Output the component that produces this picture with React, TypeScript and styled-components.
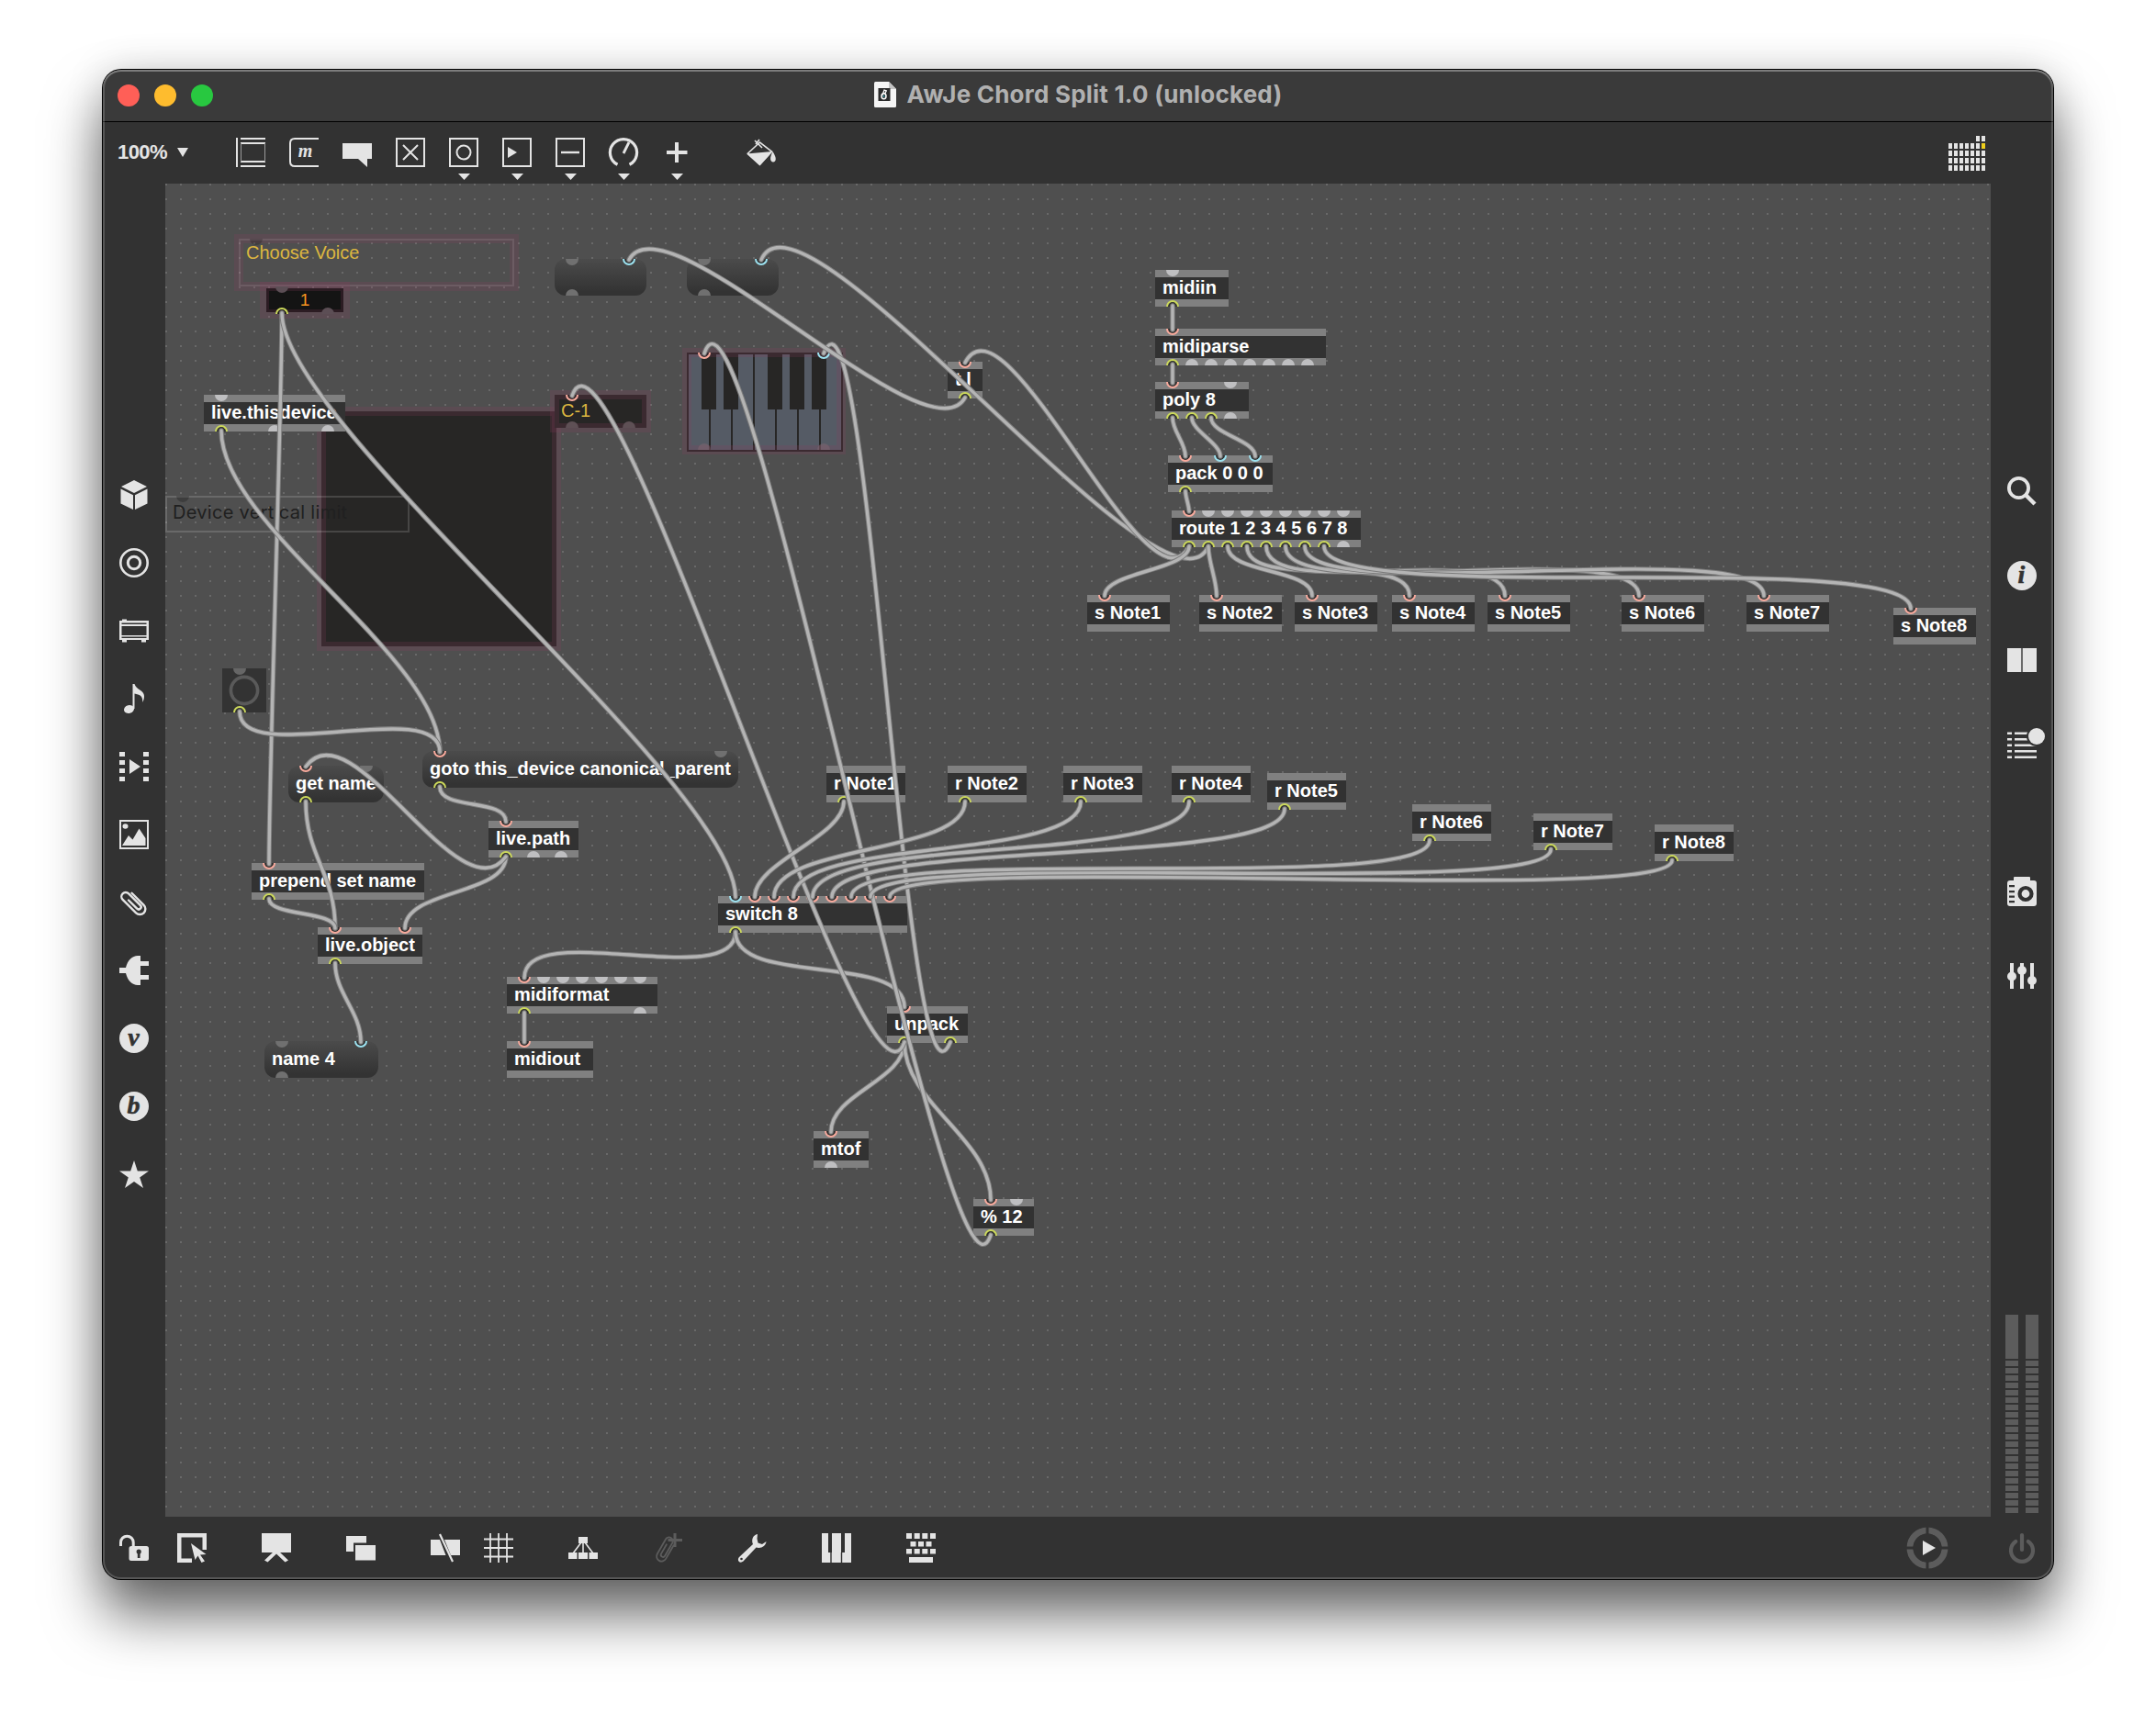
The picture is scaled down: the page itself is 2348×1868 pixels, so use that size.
import React from "react";
import styled, { createGlobalStyle, css } from "styled-components";

const INK = "#e4e4e4";
const DIM = "#5c5c5c";
const CHROME = "#323232";

const GlobalStyle = createGlobalStyle`
  html, body { margin: 0; padding: 0; background: #fff; }
  body { font-family: "Liberation Sans", Arial, sans-serif; overflow: hidden; }
  * { box-sizing: border-box; }
`;

/* ---------- window chrome ---------- */

const Desktop = styled.main`
  width: 2348px;
  height: 1868px;
  padding: 76px 112px 148px;
  background: #fff;
  overflow: hidden;
`;

const Window = styled.section`
  position: relative;
  display: flex;
  flex-direction: column;
  width: 2124px;
  height: 1644px;
  border-radius: 20px;
  background: ${CHROME};
  box-shadow: 0 0 0 1px #000, 0 0 44px rgba(0, 0, 0, 0.14), 0 38px 62px rgba(0, 0, 0, 0.6);

  &::after {
    content: "";
    position: absolute;
    inset: 0;
    border-radius: 20px;
    box-shadow: inset 0 0 0 2px rgba(255, 255, 255, 0.18), inset 0 2px 0 rgba(255, 255, 255, 0.2);
    pointer-events: none;
  }
`;

const TitleBar = styled.header`
  display: grid;
  grid-template-columns: 1fr auto 1fr;
  align-items: center;
  height: 57px;
  padding: 0 16px;
  border-bottom: 1px solid #000;
  border-radius: 20px 20px 0 0;
  background: #3a3a3a;
`;

const Lights = styled.div`
  display: flex;
  gap: 16px;
`;

const Light = styled.span<{ $color: string }>`
  width: 24px;
  height: 24px;
  border-radius: 50%;
  background: ${(p) => p.$color};
`;

const Title = styled.h1`
  display: flex;
  align-items: center;
  gap: 12px;
  height: 56px;
  margin: 0;
  padding-bottom: 2px;
  font: 700 26px/54px Inter, "Liberation Sans", sans-serif;
  letter-spacing: 0.22px;
  color: #b0b0b0;
  white-space: nowrap;
`;

const ToolBar = styled.nav`
  display: flex;
  align-items: flex-start;
  height: 67px;
  padding: 17px 74px 0 16px;
`;

const Zoom = styled.div`
  display: flex;
  align-items: center;
  gap: 11px;
  width: 129px;
  height: 32px;
  font: 700 22px/32px "Liberation Sans", sans-serif;
  letter-spacing: -0.6px;
  color: ${INK};
`;

const Tools = styled.div`
  display: flex;
  gap: 26px;
`;

const Tool = styled.div`
  display: flex;
  flex-direction: column;
  align-items: center;
  gap: 7px;
  width: 32px;
`;

const CalendarSlot = styled.div`
  margin-top: -2px;
`;

const Spacer = styled.div<{ $size?: number }>`
  ${(p) => (p.$size ? `flex: 0 0 ${p.$size}px;` : "flex: 1;")}
`;

const Middle = styled.div`
  display: flex;
  height: 1452px;
`;

const Side = styled.aside<{ $top: number }>`
  display: flex;
  flex-direction: column;
  align-items: center;
  width: 68px;
  padding-top: ${(p) => p.$top}px;
`;

const SideStack = styled.div<{ $gap: number }>`
  display: flex;
  flex-direction: column;
  gap: ${(p) => p.$gap}px;
`;

const BottomBar = styled.footer`
  display: flex;
  align-items: center;
  height: 68px;
  padding: 0 18px;
`;

const Svg = styled.svg<{ $w?: number; $h?: number }>`
  display: block;
  flex: none;
  width: ${(p) => p.$w ?? 32}px;
  height: ${(p) => p.$h ?? 32}px;
  overflow: visible;
`;

/* ---------- meters ---------- */

const Meters = styled.div`
  display: flex;
  gap: 8px;
`;

const Meter = styled.div`
  display: flex;
  flex-direction: column;
  gap: 2px;
  width: 14px;
`;

const Segment = styled.i<{ $h: number }>`
  height: ${(p) => p.$h}px;
  background: ${DIM};
`;

/* ---------- patcher canvas ---------- */

const Canvas = styled.div`
  position: relative;
  width: 1988px;
  height: 1452px;
  overflow: hidden;
  background-color: #4f4f4f;
  background-image: linear-gradient(90deg, transparent 2px, #4f4f4f 2px),
    linear-gradient(#696969 2px, #4f4f4f 2px);
  background-size: 16px 16px;
`;

const placed = css<{ $x: number; $y: number; $w: number; $h?: number }>`
  position: absolute;
  left: ${(p) => p.$x - 180}px;
  top: ${(p) => p.$y - 200}px;
  width: ${(p) => p.$w}px;
  height: ${(p) => p.$h ?? 40}px;
`;

const ObjectBox = styled.div`
  ${placed}
  border: solid #808080;
  border-width: 8px 0;
  background: #323232;
`;

const MessageBox = styled.div`
  ${placed}
  padding-top: 8px;
  border-radius: 12px;
  background: linear-gradient(#4b4b4b, #333 90%);
`;

const Label = styled.div`
  padding-left: 8px;
  font-weight: 700;
  font-size: 20px;
  line-height: 22px;
  color: #fff;
  white-space: nowrap;
`;

const PortLayer = styled.div<{ $inset?: number }>`
  position: absolute;
  inset: ${(p) => p.$inset ?? 0}px 0;
`;

const Port = styled.i<{ $at: number; $out?: boolean; $ring?: string; $fill: string }>`
  position: absolute;
  left: ${(p) => p.$at - 7}px;
  ${(p) => (p.$out ? "bottom: 0;" : "top: 0;")}
  width: 14px;
  height: 7px;
  border-radius: ${(p) => (p.$out ? "7px 7px 0 0" : "0 0 7px 7px")};
  background: ${(p) => p.$fill};
  ${(p) => p.$ring && `border: 2px solid ${p.$ring}; border-${p.$out ? "bottom" : "top"}: 0;`}
`;

const Presentation = styled.div`
  position: absolute;
  inset: -5px;
  border: 10px solid rgba(140, 60, 95, 0.2);
`;

const Panel = styled.div<{ $fill: string }>`
  ${placed}
  background: ${(p) => p.$fill};
`;

const NumberFace = styled.div`
  position: absolute;
  inset: 2px;
  background: #141414;
  font-size: 19px;
  line-height: 26px;
  text-align: center;
  color: #f79420;
`;

const Comment = styled.div<{ $color: string; $line: string }>`
  ${placed}
  padding: 2px 6px;
  border: 2px solid ${(p) => p.$line};
  font-size: 20px;
  line-height: 23px;
  color: ${(p) => p.$color};
  white-space: nowrap;
`;

const LimitText = styled.span`
  display: block;
  padding-top: 3px;
  font-family: Inter, "Liberation Sans", sans-serif;
  font-size: 20px;
  letter-spacing: 0.3px;
`;

const NoteText = styled.div`
  padding: 8px 0 0 7px;
  font-size: 20px;
  line-height: 18px;
  color: #dcb640;
`;

const Wires = styled.svg`
  position: absolute;
  inset: 0;
  width: 1988px;
  height: 1452px;
  fill: none;
  stroke-linecap: round;
`;

/* ---------- patch data (window coordinates) ---------- */

const RED = "#f8aa9d";
const BLUE = "#9ce2f0";
const LIME = "#ccd95b";

// Port codes: r/b = connected inlet, y = connected outlet, f = free
type Ports = [number, "r" | "b" | "y" | "f"][];
type Node = { t: string; x: number; y: number; w: number; i: Ports; o: Ports; m?: boolean };

const run = (kinds: string, start = 19, step = 21): Ports =>
  kinds.split("").map((k, n) => [start + n * step, k as "r" | "b" | "y" | "f"]);

const nodes: Node[] = [
  { t: "", x: 604, y: 282, w: 100, m: true, i: [[19, "f"], [81, "b"]], o: run("f") },
  { t: "", x: 748, y: 282, w: 100, m: true, i: [[19, "f"], [81, "b"]], o: run("f") },
  { t: "t l", x: 1032, y: 394, w: 38, i: run("r"), o: run("y") },
  { t: "midiin", x: 1258, y: 294, w: 80, i: run("f"), o: run("y") },
  { t: "midiparse", x: 1258, y: 358, w: 186, i: run("r"), o: run("yfffffff") },
  { t: "poly 8", x: 1258, y: 416, w: 102, i: [[19, "r"], [82, "f"]], o: run("yyyf") },
  { t: "pack 0 0 0", x: 1272, y: 496, w: 114, i: run("rbb", 19, 38), o: run("y") },
  { t: "route 1 2 3 4 5 6 7 8", x: 1276, y: 556, w: 206, i: run("rffffffff"), o: run("yyyyyyyyf") },
  ...[1184, 1306, 1410, 1516, 1620, 1766, 1902, 2062].map((x, n) => ({
    t: `s Note${n + 1}`, x, y: n === 7 ? 662 : 648, w: 90, i: run("r"), o: [] as Ports,
  })),
  ...([[900, 834], [1032, 834], [1158, 834], [1276, 834], [1380, 842], [1538, 876], [1670, 886], [1802, 898]] as const).map(
    ([x, y], n) => ({ t: `r Note${n + 1}`, x, y, w: 86, i: [] as Ports, o: run("y") })
  ),
  { t: "live.thisdevice", x: 222, y: 430, w: 154, i: run("f"), o: [[19, "y"], [77, "f"], [135, "f"]] },
  { t: "get name", x: 314, y: 834, w: 104, m: true, i: [[19, "r"], [85, "f"]], o: run("y") },
  { t: "goto this_device canonical_parent", x: 460, y: 818, w: 344, m: true, i: [[19, "r"], [325, "f"]], o: run("y") },
  { t: "live.path", x: 532, y: 894, w: 98, i: run("r"), o: run("yff", 19, 30) },
  { t: "prepend set name", x: 274, y: 940, w: 188, i: run("r"), o: run("y") },
  { t: "live.object", x: 346, y: 1010, w: 114, i: run("rr", 19, 76), o: run("y") },
  { t: "name 4", x: 288, y: 1134, w: 124, m: true, i: [[19, "f"], [105, "b"]], o: run("f") },
  { t: "midiformat", x: 552, y: 1064, w: 164, i: run("rffffff"), o: [[19, "y"], [145, "f"]] },
  { t: "midiout", x: 552, y: 1134, w: 94, i: run("r"), o: [] },
  { t: "switch 8", x: 782, y: 976, w: 206, i: run("brrrrrrrr"), o: run("y") },
  { t: "unpack", x: 966, y: 1096, w: 88, i: run("r"), o: run("yy", 19, 50) },
  { t: "mtof", x: 886, y: 1232, w: 60, i: run("r"), o: run("f") },
  { t: "% 12", x: 1060, y: 1306, w: 66, i: [[19, "r"], [47, "f"]], o: run("y") },
];

// x1, y1 (outlet), x2, y2 (inlet), vertical handle, sideways handle for cords that run upwards
const wires: number[][] = [
  [307, 342, 293, 940, 100],
  [307, 342, 801, 976, 123],
  [241, 470, 479, 818, 105],
  [261, 776, 479, 818, 62],
  [333, 874, 365, 1010, 60],
  [293, 980, 365, 1010, 19],
  [479, 858, 551, 894, 26],
  [551, 934, 441, 1010, 42],
  [551, 934, 333, 834, 68, 50],
  [365, 1050, 393, 1134, 33],
  [801, 1016, 571, 1064, 66],
  [571, 1104, 571, 1134, 5],
  [801, 1016, 985, 1096, 60],
  [985, 1136, 905, 1232, 42],
  [985, 1136, 1079, 1306, 68],
  [985, 1136, 623, 430, 120, 42],
  [1035, 1136, 897, 384, 120, 50],
  [1079, 1346, 767, 384, 135, 45],
  [919, 874, 822, 976, 38],
  [1051, 874, 843, 976, 58],
  [1177, 874, 864, 976, 65],
  [1295, 874, 885, 976, 70],
  [1399, 882, 906, 976, 65],
  [1557, 916, 927, 976, 62],
  [1689, 926, 948, 976, 57],
  [1821, 938, 969, 976, 52],
  [1051, 434, 685, 282, 74, 40],
  [1316, 596, 829, 282, 102, 45],
  [1295, 596, 1051, 394, 85, 45],
  [1277, 334, 1277, 358, 5],
  [1277, 398, 1277, 416, 5],
  [1277, 456, 1291, 496, 15],
  [1298, 456, 1329, 496, 14],
  [1319, 456, 1367, 496, 18],
  [1291, 536, 1295, 556, 6],
  [1295, 596, 1203, 648, 26],
  [1316, 596, 1325, 648, 18],
  [1337, 596, 1429, 648, 30],
  [1358, 596, 1535, 648, 50],
  [1379, 596, 1639, 648, 62],
  [1400, 596, 1785, 648, 66],
  [1421, 596, 1921, 648, 68],
  [1442, 596, 2081, 662, 68],
];

const wirePath = ([ax, ay, bx, by, d, s = 0]: number[]) => {
  const side = bx < ax ? -s : s;
  const x1 = ax - 180, y1 = ay - 201, x2 = bx - 180, y2 = by - 199;
  return `M${x1} ${y1}C${x1 + side} ${y1 + d} ${x2 - side} ${y2 - d} ${x2} ${y2}`;
};

const ringOf = { r: RED, b: BLUE, y: LIME, f: undefined };

function PortSet({ i, o, free, hole, inset }: { i: Ports; o: Ports; free: string; hole: string; inset?: number }) {
  return (
    <PortLayer $inset={inset}>
      {i.map(([at, k]) => (
        <Port key={`i${at}`} $at={at} $ring={ringOf[k]} $fill={k === "f" ? free : hole} />
      ))}
      {o.map(([at, k]) => (
        <Port key={`o${at}`} $out $at={at} $ring={ringOf[k]} $fill={k === "f" ? free : hole} />
      ))}
    </PortLayer>
  );
}

function PatchNode({ n }: { n: Node }) {
  const Box = n.m ? MessageBox : ObjectBox;
  return (
    <Box $x={n.x} $y={n.y} $w={n.w}>
      <Label>{n.t}</Label>
      <PortSet i={n.i} o={n.o} free={n.m ? "#707070" : "#bfbfc1"} hole="#303030" inset={n.m ? 0 : -8} />
    </Box>
  );
}

function Kslider() {
  return (
    <Panel $x={748} $y={384} $w={168} $h={106} $fill="transparent">
      <Svg $w={170} $h={108} viewBox="0 0 170 108">
        <rect width="170" height="108" fill="#272625" />
        {[0, 1, 2, 3, 4, 5, 6].map((k) => (
          <rect key={k} x={2 + 24 * k} y="2" width="22" height="104" fill="#555b65" />
        ))}
        {[16, 40, 88, 112, 136].map((x) => (
          <rect key={x} x={x} y="2" width="16" height="60" fill="#272625" />
        ))}
      </Svg>
      <Presentation />
      <PortSet i={[[19, "r"], [149, "b"]]} o={run("ff", 19, 130)} free="rgba(135,105,115,.45)" hole="transparent" />
    </Panel>
  );
}

function Patcher() {
  return (
    <Canvas>
      <Panel $x={350} $y={448} $w={256} $h={256} $fill="#272625">
        <Presentation />
      </Panel>
      <Comment $x={260} $y={260} $w={300} $h={52} $color="#dcb640" $line="rgba(255,255,255,.13)">
        Choose Voice
      </Comment>
      <Panel $x={260} $y={260} $w={300} $h={52} $fill="transparent">
        <Presentation />
        <PortSet i={run("f")} o={[]} free="rgba(0,0,0,.2)" hole="" />
      </Panel>
      <Panel $x={288} $y={312} $w={88} $h={30} $fill="transparent">
        <NumberFace>1</NumberFace>
        <Presentation />
        <PortSet i={run("f")} o={[[19, "y"], [69, "f"]]} free="#5c4e55" hole="#201a1d" />
      </Panel>
      <Panel $x={604} $y={430} $w={100} $h={36} $fill="#272625">
        <NoteText>C-1</NoteText>
        <Presentation />
        <PortSet i={run("r")} o={run("ff", 19, 62)} free="#5e5055" hole="#302428" />
      </Panel>
      <Kslider />
      <Comment $x={180} $y={540} $w={266} $h={40} $color="#202020" $line="rgba(255,255,255,.15)">
        <LimitText>Device vertical limit</LimitText>
      </Comment>
      <Panel $x={180} $y={540} $w={266} $h={40} $fill="transparent">
        <PortSet i={run("f")} o={[]} free="rgba(0,0,0,.22)" hole="" />
      </Panel>
      <Panel $x={242} $y={728} $w={48} $h={48} $fill="#333">
        <Svg $w={48} $h={48} viewBox="0 0 48 48">
          <circle cx="24" cy="24" r="14.6" fill="none" stroke="#5a5a5a" strokeWidth="3.6" />
        </Svg>
        <PortSet i={run("f")} o={run("y")} free="#666" hole="#303030" />
      </Panel>
      {nodes.map((n) => (
        <PatchNode key={`${n.x}-${n.y}`} n={n} />
      ))}
      <Wires viewBox="0 0 1988 1452">
        {wires.map((w, n) => (
          <g key={n}>
            <path d={wirePath(w)} stroke="#7c7c7c" strokeWidth="5.4" />
            <path d={wirePath(w)} stroke="#b4b4b4" strokeWidth="3.4" />
          </g>
        ))}
      </Wires>
    </Canvas>
  );
}

/* ---------- icons ---------- */

const Icon = ({ children, color = INK }: { children: React.ReactNode; color?: string }) => (
  <Svg viewBox="0 0 32 32" fill={color} stroke="none">{children}</Svg>
);

const line = { fill: "none", stroke: INK, strokeWidth: 2 };

const Frame = () => <rect x="1" y="1" width="30" height="30" {...line} />;

const Caret = ({ w = 13, h = 7 }: { w?: number; h?: number }) => (
  <Svg $w={w} $h={h} viewBox="0 0 12 7" preserveAspectRatio="none"><path d="M0 0H12L6 7Z" fill={INK} /></Svg>
);

const toolIcons: [React.ReactNode, boolean][] = [
  [<><path d="M0 0h2v32h-2zM5 0h27v2h-27zM5 5h27v2h-27zM5 25h27v2h-27zM5 30h27v2h-27z" /><path d="M5.500 6V26M31.500 6V26" stroke="#9a9a9a" strokeWidth="1" /></>, false],
  [<><path d="M32 1H6Q1 1 1 6V26Q1 31 6 31H32" {...line} /><text x="17.500" y="21" textAnchor="middle" fontFamily="Liberation Serif, serif" fontStyle="italic" fontWeight="700" fontSize="20">m</text></>, false],
  [<path d="M0 6H32V23H27V32L17 23H0Z" />, false],
  [<><Frame /><path d="M8 8L24 24M24 8L8 24" {...line} /></>, false],
  [<><Frame /><circle cx="16" cy="16" r="7.500" {...line} /></>, true],
  [<><Frame /><path d="M6 10L16 16L6 22Z" /></>, true],
  [<><Frame /><path d="M6 16H26" {...line} strokeWidth="2.400" /></>, true],
  [<><path d="M9.500 29.800A14.600 14.600 0 1 1 22.500 29.800" {...line} strokeWidth="3.200" transform="translate(0 -.5)" /><path d="M16 17L22 5" {...line} strokeWidth="2.800" /></>, true],
  [<path d="M14 5h4v9h9.500v4h-9.500v9h-4v-9h-9v-4h9z" />, true],
];

const LeftBadge = ({ ch }: { ch: string }) => (
  <><circle cx="16" cy="16" r="16" /><text x="15.500" y="24" textAnchor="middle" fontFamily="Liberation Serif, serif" fontStyle="italic" fontWeight="700" fontSize="28" fill={CHROME} stroke={CHROME} strokeWidth=".6">{ch}</text></>
);

const Clip = ({ w = 2.4 }: { w?: number }) => (
  <g transform="translate(16 16) rotate(-45)" fill="none" strokeWidth={w} strokeLinecap="round">
    <path d="M5.500 -9V9.500A6 6 0 0 1 -6.500 9.500V-11A4.600 4.600 0 0 1 2.700 -11V7A2.600 2.600 0 0 1 -2.500 7V-6" />
  </g>
);

const leftIcons: React.ReactNode[] = [
  <path d="M16 0L30 7L16 14L2 7ZM1.500 9.500L15 16.200V32L1.500 25.500ZM30.500 9.500L17 16.200V32L30.500 25.500Z" />,
  <><circle cx="16" cy="16" r="14.700" {...line} strokeWidth="2.600" /><circle cx="16" cy="16" r="6.700" {...line} strokeWidth="3" /></>,
  <><path d="M0 5H32V26H0ZM2.500 11V21H29.500V11ZM2.500 7.500V9H29.500V7.500ZM2.500 22.500V24H29.500V22.500Z" fillRule="evenodd" /><path d="M3 3.500H8V6H3ZM3 25H8V28.500H3ZM24 25H29V28.500H24Z" /></>,
  <><ellipse cx="10.500" cy="27.500" rx="5.600" ry="4.300" transform="rotate(-15 10.500 27.500)" /><path d="M14.500 0H16.500C18 6 27 7 27 13C27 16 26.500 18 25 20C26 14 23 11.500 16.500 10.500V27H14.500Z" /></>,
  <><path d="M0 0h6v5H0zM0 9h6v5H0zM0 18h6v5H0zM0 27h6v5H0zM26 0h6v5h-6zM26 9h6v5h-6zM26 18h6v5h-6zM26 27h6v5h-6z" /><path d="M11 8L23 16L11 24Z" /></>,
  <><rect x="1" y="1" width="30" height="30" {...line} /><ellipse cx="6.500" cy="7" rx="3" ry="2.800" /><path d="M3 28L10 17L14.500 21.500L21.500 9.500L28.500 20V28Z" /></>,
  <g stroke={INK}><Clip /></g>,
  <path d="M0 13H7C9 5 14 0 20 0H23V6H32V11H23V21H32V26H23V32H20C14 32 9 27 7 19H0Z" />,
  <LeftBadge ch="v" />,
  <LeftBadge ch="b" />,
  <path d="M16 1L19.800 12.500H32L22.200 19.500L26 31L16 24L6 31L9.800 19.500L0 12.500H12.200Z" />,
];

const rightTop: React.ReactNode[] = [
  <><circle cx="12.500" cy="12.500" r="10.600" {...line} strokeWidth="3.800" /><path d="M20 20L30 30" {...line} strokeWidth="4.400" /></>,
  <LeftBadge ch="i" />,
  <><rect y="3" width="15" height="26" /><rect x="17" y="3" width="15" height="26" /><rect x="15" y="3" width="2" height="26" fill="#6a6a6a" /></>,
  <><path d="M0 2.500h5v2.500H0zM0 9h5v2.500H0zM0 15.500h5v2.500H0zM0 22h5v2.500H0zM0 28.500h5v2.500H0zM8 2.500h24v2.500H8zM8 9h24v2.500H8zM8 15.500h24v2.500H8zM8 22h24v2.500H8zM8 28.500h24v2.500H8z" /><circle cx="32" cy="7" r="11" fill={CHROME} /><circle cx="32" cy="7" r="9" /></>,
];

const rightLow: React.ReactNode[] = [
  <><path d="M7 1Q7 0 8 0H24Q25 0 25 1V4H29Q32 4 32 7V29Q32 32 29 32H3Q0 32 0 29V7Q0 4 3 4H7Z" /><circle cx="20" cy="18.500" r="6.500" fill="none" stroke={CHROME} strokeWidth="4.200" /><path d="M2 9h6v2.200H2zM2 15h6v2.200H2zM2 20.500h6v2.200H2zM2 26h6v2.200H2z" fill={CHROME} /></>,
  <><path d="M3 2h4v28H3zM14 2h4v28h-4zM25 2h4v28h-4z" /><circle cx="5" cy="16.500" r="5" /><circle cx="16" cy="10" r="5" /><circle cx="27" cy="21" r="5" /></>,
];

const bottomIcons: [React.ReactNode, number][] = [
  [<><path d="M11.500 14H29.500Q32 14 32 16.500V27.500Q32 30 29.500 30H13Q10.500 30 10.500 27.500V16.500Q10.500 14 13 14Z" /><path d="M1.500 14V10A6.800 6.800 0 0 1 15.200 10V14" {...line} strokeWidth="3" /><circle cx="21.200" cy="20" r="2.600" fill={CHROME} /><path d="M19.800 20H22.600V27H19.800Z" fill={CHROME} /></>, 31],
  [<><path d="M0 0H32V18H27.500V4.500H4.500V27.500H16V32H0Z" /><path d="M15 11L31.500 23L25 23.500L30 30.500L26.500 32L22.500 24.500L19.500 29Z" /></>, 60],
  [<><path d="M0 0H32V21H0Z" /><path d="M13 20H19L29 29.500L25.500 31.500L16 22.500L6.500 31.500L3 29.500Z" /></>, 60],
  [<><path d="M0 3H22V10.500H8V20H0Z" /><path d="M10 13H32V29.500H10Z" /></>, 60],
  [<><path d="M0 7H10L16.500 24H0ZM15 7H32V24H22Z" /><path d="M10 1L24 31" {...line} strokeWidth="2.200" /></>, 26],
  [<path d="M7 0V32M16 0V32M25 0V32M0 6.500H32M0 16H32M0 25.500H32" {...line} strokeWidth="1.800" />, 60],
  [<><path d="M11 4H21V11H11ZM0 21H9.500V28H0ZM11 21H21V28H11ZM22.500 21H32V28H22.500Z" /><path d="M16 10V22M14 10L5 22M18 10L27 22" {...line} strokeWidth="1.600" /></>, 60],
  [<g stroke={DIM}><g transform="translate(-3 4) rotate(75 16 16) scale(.9)"><Clip w={2} /></g><path d="M24 0V15M16.500 7.500H32" strokeWidth="3" /></g>, 60],
  [<><path d="M22 1C17 2 15 7 17 12L2 26C-1 30 3 33.500 6.500 30.500L20.500 15.500C26 17 31 14 31.500 9L27 12L22.500 10.500L21.500 6Z" /><circle cx="4.500" cy="28" r="1.300" fill={CHROME} /></>, 60],
  [<><path d="M0 0H32V32H0Z" /><path d="M7 0H11V21H7ZM21 0H25V21H21Z" fill={CHROME} /><path d="M10 21V32M21.500 21V32" stroke={CHROME} strokeWidth="1.400" /></>, 60],
  [<path d="M0 0h6v6H0zM8.700 0h6v6h-6zM17.300 0h6v6h-6zM26 0h6v6h-6zM4.500 9h6v5.500h-6zM13 9h6v5.500h-6zM21.500 9h6v5.500h-6zM0 17h6v5.500H0zM8.700 17h6v5.500h-6zM17.300 17h6v5.500h-6zM26 17h6v5.500h-6zM3 26h26v6H3z" />, 0],
];

const DocIcon = () => (
  <Svg $w={24} $h={28} viewBox="0 0 24 28">
    <path d="M1.500 0H16L24 8V26.500Q24 28 22.500 28H1.500Q0 28 0 26.500V1.500Q0 0 1.500 0Z" fill="#f5f5f5" />
    <path d="M16 0L24 8H16Z" fill="#c4c4c4" />
    <rect x="4.500" y="7" width="13" height="14" fill="#2b2b2b" />
    <ellipse cx="10.500" cy="15.800" rx="2.500" ry="3" fill="none" stroke="#fff" strokeWidth="1.500" />
    <path d="M9 14.500L11 9L13.300 9.800L11.500 13.500" fill="none" stroke="#fff" strokeWidth="1.300" />
    <circle cx="10.500" cy="15.800" r="1" fill="#3fa7b5" />
  </Svg>
);

const Calendar = () => {
  const cells: React.ReactNode[] = [];
  for (let r = 0; r < 5; r++)
    for (let c = 0; c < 7; c++)
      if (r > 0 || c > 4)
        cells.push(<rect key={`${r}${c}`} x={c * 6} y={r * 8} width="4" height="6" fill={r === 1 && c === 6 ? "#efcf1c" : INK} />);
  return <Svg $w={40} $h={38} viewBox="0 0 40 38">{cells}</Svg>;
};

export default function App() {
  return (
    <>
      <GlobalStyle />
      <Desktop>
        <Window>
          <TitleBar>
            <Lights>
              <Light $color="#ff5f57" />
              <Light $color="#febc2e" />
              <Light $color="#28c840" />
            </Lights>
            <Title><DocIcon />AwJe Chord Split 1.0 (unlocked)</Title>
          </TitleBar>
          <ToolBar>
            <Zoom>100%<Caret w={12} h={10} /></Zoom>
            <Tools>
              {toolIcons.map(([icon, menu], n) => (
                <Tool key={n}><Icon>{icon}</Icon>{menu && <Caret />}</Tool>
              ))}
            </Tools>
            <Spacer $size={60} />
            <Icon>
              <path d="M1.500 17L14.500 5L27.500 15L14.500 29Z" fill="none" stroke={INK} strokeWidth="1.600" />
              <path d="M0 17.500L28 15L14.500 30.500Z" />
              <path d="M9 3L17 11M14 2L10 7" {...line} strokeWidth="1.600" />
              <path d="M28.500 15C33 22 32.500 26 29 26.500C25.500 26 25 22 28.500 15Z" />
            </Icon>
            <Spacer />
            <CalendarSlot><Calendar /></CalendarSlot>
          </ToolBar>
          <Middle>
            <Side $top={323}>
              <SideStack $gap={42}>
                {leftIcons.map((icon, n) => <Icon key={n}>{icon}</Icon>)}
              </SideStack>
            </Side>
            <Patcher />
            <Side $top={319}>
              <SideStack $gap={60}>
                {rightTop.map((icon, n) => <Icon key={n}>{icon}</Icon>)}
              </SideStack>
              <Spacer $size={128} />
              <SideStack $gap={60}>
                {rightLow.map((icon, n) => <Icon key={n}>{icon}</Icon>)}
              </SideStack>
              <Spacer $size={353} />
              <Meters>
                {[0, 1].map((m) => (
                  <Meter key={m}>
                    <Segment $h={48} />
                    {Array.from({ length: 21 }, (_, n) => <Segment key={n} $h={6} />)}
                  </Meter>
                ))}
              </Meters>
            </Side>
          </Middle>
          <BottomBar>
            {bottomIcons.map(([icon, gap], n) => (
              <React.Fragment key={n}>
                <Icon>{icon}</Icon>
                {gap > 0 && <Spacer $size={gap} />}
              </React.Fragment>
            ))}
            <Spacer />
            <Svg $w={46} $h={46} viewBox="0 0 46 46">
              <circle cx="23" cy="23" r="19" fill="none" stroke={DIM} strokeWidth="7" />
              <path d="M23 0V46M0 23H46" stroke={CHROME} strokeWidth="3" />
              <circle cx="23" cy="23" r="15.500" fill={CHROME} />
              <path d="M18 15L32 23L18 31Z" fill={INK} />
            </Svg>
            <Spacer $size={64} />
            <Icon>
              <path d="M9.200 8.900A12 12 0 1 0 22.800 8.900" fill="none" stroke={DIM} strokeWidth="4.200" strokeLinecap="round" />
              <path d="M16 2V18" stroke={DIM} strokeWidth="4.200" strokeLinecap="round" />
            </Icon>
          </BottomBar>
        </Window>
      </Desktop>
    </>
  );
}
